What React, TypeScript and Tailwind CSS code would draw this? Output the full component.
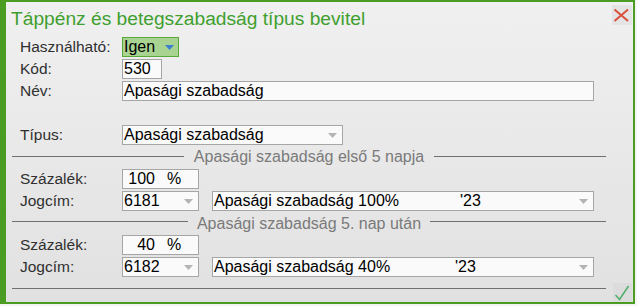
import React from "react";

const Tri = ({ color }: { color: string }) => (
  <svg width="9" height="5" viewBox="0 0 9 5" className="shrink-0">
    <path d="M0 0h9L4.5 5z" fill={color} />
  </svg>
);

const Label = ({ children }: { children: React.ReactNode }) => (
  <div className="w-[110px] shrink-0 pl-[8px] leading-[20px] text-[15.5px] text-[#303030]">{children}</div>
);

const Box = ({ w, children, className = "" }: { w: string; children?: React.ReactNode; className?: string }) => (
  <div className={`${w} h-[20px] border border-[#a6a6a6] bg-[#fafafa] flex items-center pl-[1px] leading-[18px] text-black ${className}`}>
    {children}
  </div>
);

const Select = ({ w, children }: { w: string; children?: React.ReactNode }) => (
  <div className={`${w} h-[20px] border border-[#a6a6a6] bg-[#fafafa] flex items-center pl-[1px] pr-[5px] leading-[18px] text-black`}>
    <div className="flex-1 flex whitespace-pre">{children}</div>
    <Tri color="#b4b4b4" />
  </div>
);

export default function App() {
  return (
    <div className="w-[637px] h-[306px] bg-[#f4f4f4] font-['Liberation_Sans',Arial,sans-serif] text-[16px]">
      <div className="w-[635px] h-[304px] border-t-2 border-r-2 border-b-2 border-l-[6px] border-[#4b9c22] bg-linear-to-b from-[#f0f0f0] to-[#e1e1e1] flex flex-col">
        {/* header */}
        <div className="flex justify-between items-start pt-[3px] pl-[5px] pr-[1px]">
          <div className="mt-[3px] text-[19.2px] leading-[22px] text-[#3f9f2f]">
            Táppénz és betegszabadság típus bevitel
          </div>
          <div className="w-[20px] h-[20px] bg-[#e4e4e4] flex items-center justify-center">
            <svg width="20" height="20" viewBox="0 0 20 20">
              <path d="M2.5 4.5L16 16M16 4.5L2.5 16" stroke="#d9503c" strokeWidth="2" />
            </svg>
          </div>
        </div>

        {/* body */}
        <div className="flex flex-col pl-[6px] pr-[27px]">
          <div className="flex h-[20px] mt-[7px]">
            <Label>Használható:</Label>
            <div className="w-[57px] h-[20px] border border-[#5aa83a] bg-[#a9d391] flex items-center pl-[1px] pr-[4px] leading-[18px] text-black">
              <span className="flex-1">Igen</span>
              <Tri color="#3d7fd0" />
            </div>
          </div>
          <div className="flex h-[20px] mt-[2px]">
            <Label>Kód:</Label>
            <Box w="w-[40px]">530</Box>
          </div>
          <div className="flex h-[20px] mt-[2px]">
            <Label>Név:</Label>
            <Box w="w-[472px]">Apasági szabadság</Box>
          </div>
          <div className="flex h-[20px] mt-[24px]">
            <Label>Típus:</Label>
            <Select w="w-[221px]">Apasági szabadság</Select>
          </div>

          {/* separator 1 */}
          <div className="flex h-[24px] items-start">
            <div className="flex-1 h-px bg-[#707070] mt-[11px]" />
            <div className="px-[10px] mt-[2px] leading-[20px] text-[#7a7a7a]">Apasági szabadság első 5 napja</div>
            <div className="flex-1 h-px bg-[#707070] mt-[11px]" />
          </div>

          <div className="flex h-[20px]">
            <Label>Százalék:</Label>
            <Box w="w-[77px]">
              <span className="w-[31px] text-right">100</span>
              <span className="ml-[12px]">%</span>
            </Box>
          </div>
          <div className="flex h-[20px] mt-[2px]">
            <Label>Jogcím:</Label>
            <Select w="w-[77px]">6181</Select>
            <div className="ml-[13px]">
              <Select w="w-[382px]">
                <span className="w-[246px]">Apasági szabadság 100%</span>
                <span>'23</span>
              </Select>
            </div>
          </div>

          {/* separator 2 */}
          <div className="flex h-[24px] items-start">
            <div className="flex-1 h-px bg-[#707070] mt-[10px]" />
            <div className="px-[9px] mt-[3px] leading-[20px] text-[#7a7a7a]">Apasági szabadság 5. nap után</div>
            <div className="flex-1 h-px bg-[#707070] mt-[10px]" />
          </div>

          <div className="flex h-[20px]">
            <Label>Százalék:</Label>
            <Box w="w-[77px]">
              <span className="w-[31px] text-right">40</span>
              <span className="ml-[12px]">%</span>
            </Box>
          </div>
          <div className="flex h-[20px] mt-[2px]">
            <Label>Jogcím:</Label>
            <Select w="w-[77px]">6182</Select>
            <div className="ml-[13px]">
              <Select w="w-[382px]">
                <span className="w-[241px]">Apasági szabadság 40%</span>
                <span>'23</span>
              </Select>
            </div>
          </div>
        </div>

        {/* footer */}
        <div className="flex items-start mt-[6px] pl-[6px] pr-[1px]">
          <div className="flex-1 h-px bg-[#707070] mt-[5px]" />
          <div className="ml-[7px] w-[19px] h-[19px] bg-[#dcdcdc] flex items-center justify-center">
            <svg width="19" height="19" viewBox="0 0 19 19">
              <path d="M2.5 12L6.5 16.5L15.5 3" stroke="#4fae6a" strokeWidth="1.5" fill="none" />
            </svg>
          </div>
        </div>
      </div>
    </div>
  );
}
